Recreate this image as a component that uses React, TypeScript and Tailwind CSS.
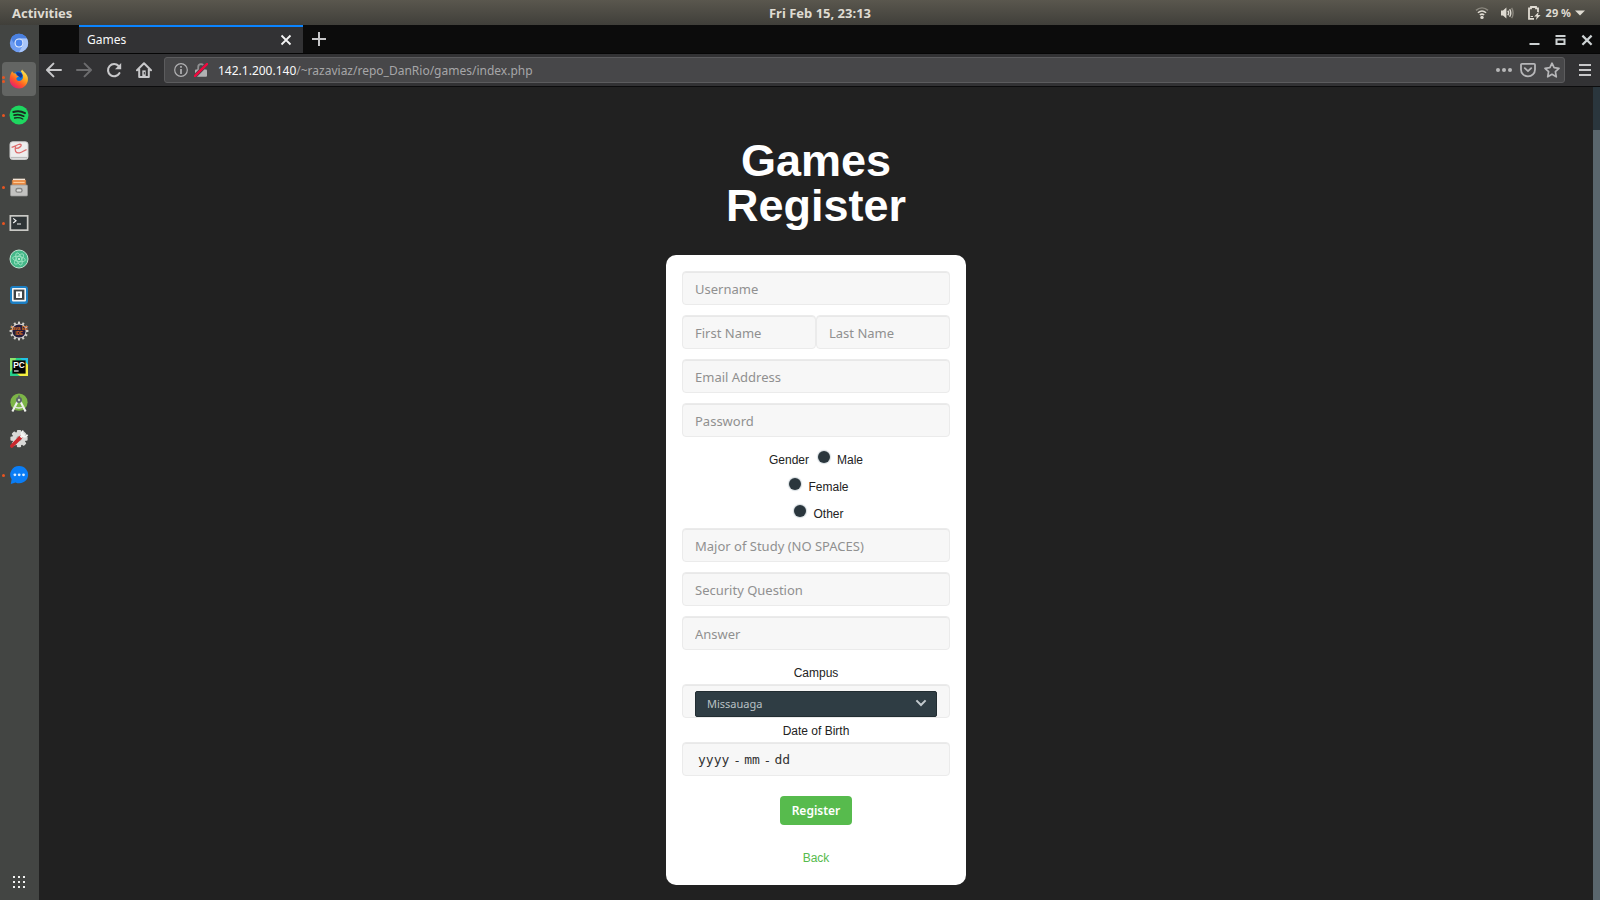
import type { ReactNode } from "react";

const field =
  "h-[34px] w-full min-w-0 rounded border border-[#ebebeb] bg-[#f7f7f7] px-3 pt-px font-['Noto_Sans',sans-serif] text-[13px] text-[#333] shadow-[inset_0_1px_0_#e8e8e8] outline-none placeholder:text-[#909090]";

type DockItem = { name: string; windows: number; active?: boolean; icon: ReactNode };

const teeth = [0, 30, 60, 90, 120, 150, 180, 210, 240, 270, 300, 330];

const dockItems: DockItem[] = [
  {
    name: "Chromium",
    windows: 0,
    icon: (
      <>
        <circle cx="10" cy="10" r="9.2" fill="#6f9df2" />
        <path d="M2 5.4A9.2 9.2 0 0 1 18 5.6H10A4.5 4.5 0 0 0 6 12.2Z" fill="#4a80e0" />
        <path d="M18 5.6A9.2 9.2 0 0 1 10 19.2L14 12.2A4.5 4.5 0 0 0 10 5.6Z" fill="#a9c6fa" />
        <circle cx="10" cy="10" r="4.5" fill="#e6eefc" />
        <circle cx="10" cy="10" r="3.4" fill="#4c86ee" />
      </>
    ),
  },
  {
    name: "Firefox",
    windows: 2,
    active: true,
    icon: (
      <>
        <defs>
          <linearGradient id="fox" x1="0.9" y1="0" x2="0.2" y2="1">
            <stop offset="0" stopColor="#fff36b" />
            <stop offset="0.35" stopColor="#ffb01e" />
            <stop offset="0.65" stopColor="#ff5a26" />
            <stop offset="1" stopColor="#e5127a" />
          </linearGradient>
        </defs>
        <circle cx="9.8" cy="9" r="6.8" fill="#0b76e0" />
        <path d="M7 3.5A6.5 6.5 0 0 1 14 6L12 9 8 6Z" fill="#17348f" />
        <path
          d="M1.6 5.2 3 2.2 5 4.4C6.2 4 7.4 4.6 7.6 6.6L9.8 7.2 7.4 9C7 11.6 9.4 12.8 12 11.6 14.6 10.2 14.8 6 11.8 2.6L13.2 0.6C13.5 2.4 17.6 4 18.8 8.4 19.8 14.4 15.4 19.4 10 19.4 4.4 19.4 0.4 15 0.7 10 0.8 8.2 1 6.6 1.6 5.2Z"
          fill="url(#fox)"
        />
      </>
    ),
  },
  {
    name: "Spotify",
    windows: 1,
    icon: (
      <>
        <circle cx="10" cy="10" r="9.5" fill="#1ed760" />
        <g fill="none" stroke="#1a2a20" strokeLinecap="round">
          <path d="M4.3 7C8 5.8 12.6 6.2 16 8.1" strokeWidth="2" />
          <path d="M5 10.1C8.2 9.2 12 9.6 14.8 11.2" strokeWidth="1.7" />
          <path d="M5.6 13C8.4 12.3 11.4 12.6 13.8 14" strokeWidth="1.4" />
        </g>
      </>
    ),
  },
  {
    name: "Document viewer",
    windows: 0,
    icon: (
      <>
        <rect x="1" y="0.8" width="18" height="17.6" rx="2.5" fill="#ededed" stroke="#cfcfcf" />
        <path d="M2.6 6.4C7 5 8.6 3.4 11 3.2 14 3.4 11 7.6 6.6 7.4M6.6 5.4C5.4 9.4 6.6 12.4 10.4 11.8 13.6 11.2 15.4 9 17.6 8.6" fill="none" stroke="#de6b6b" strokeWidth="1.3" />
        <path d="M2 16.6H18" stroke="#bcbcbc" strokeWidth="1.4" />
      </>
    ),
  },
  {
    name: "Files",
    windows: 1,
    icon: (
      <>
        <path d="M3 1.5H17L18.5 8H1.5Z" fill="#5b5148" />
        <rect x="3.2" y="3" width="13.6" height="6" fill="#e98a43" />
        <path d="M4 2.4H16" stroke="#f5e6d8" strokeWidth="1.4" />
        <path d="M4.4 5.4H15.6" stroke="#ffd2a0" />
        <rect x="1.5" y="8" width="17" height="11" rx="1" fill="#c2c2c0" stroke="#9a9a98" strokeWidth="0.7" />
        <rect x="6.3" y="10.8" width="7.4" height="5" rx="2.4" fill="#858583" />
        <rect x="7.7" y="12.2" width="4.6" height="2.4" rx="1.2" fill="#dededc" />
      </>
    ),
  },
  {
    name: "Terminal",
    windows: 1,
    icon: (
      <>
        <rect x="0.5" y="2" width="19" height="16" fill="#c9c9c5" />
        <rect x="2.2" y="3.7" width="15.6" height="12.6" fill="#2e3436" />
        <path d="M4.2 5.4 7 7.7 4.2 10M8 11H12" fill="none" stroke="#f2f2f2" strokeWidth="1.2" />
      </>
    ),
  },
  {
    name: "Atom",
    windows: 0,
    icon: (
      <>
        <circle cx="10" cy="10" r="9" fill="#44b889" stroke="#bfe6d2" strokeWidth="1" />
        <g fill="none" stroke="#a4e6c5" strokeWidth="0.8">
          <ellipse cx="10" cy="10" rx="6.4" ry="2.6" transform="rotate(10 10 10)" />
          <ellipse cx="10" cy="10" rx="6.4" ry="2.6" transform="rotate(70 10 10)" />
          <ellipse cx="10" cy="10" rx="6.4" ry="2.6" transform="rotate(130 10 10)" />
        </g>
        <circle cx="10" cy="10" r="1" fill="#dffbeb" />
      </>
    ),
  },
  {
    name: "Brackets",
    windows: 0,
    icon: (
      <>
        <rect x="1" y="1" width="18" height="18" rx="3" fill="#1c7fc4" />
        <rect x="3" y="3" width="14" height="13.4" rx="0.8" fill="#f4f4f4" />
        <rect x="4.6" y="4.6" width="10.8" height="10.2" fill="#3d4145" />
        <path d="M7 6.4H13V13H7Z" fill="#fff" />
        <path d="M9.2 8H10.8V11.4H9.2Z" fill="#8d9093" />
      </>
    ),
  },
  {
    name: "Java EE IDE",
    windows: 0,
    icon: (
      <>
        {teeth.map((angle) => (
          <rect key={angle} x="9" y="0.6" width="2" height="3.4" fill="#d5d2cc" transform={`rotate(${angle} 10 10)`} />
        ))}
        <circle cx="10" cy="10" r="7.6" fill="#d5d2cc" />
        <circle cx="10" cy="10" r="6.6" fill="#251d3c" />
        <g fill="#d9711e" fontFamily="Liberation Sans, sans-serif" fontWeight="700" textAnchor="middle">
          <text x="10" y="9.4" fontSize="4.6">Java EE</text>
          <text x="10" y="14.2" fontSize="4.6">IDE</text>
        </g>
      </>
    ),
  },
  {
    name: "PyCharm",
    windows: 0,
    icon: (
      <>
        <path d="M1 1H19V19H1Z" fill="#25d08b" />
        <path d="M11 1H19V12L15 5Z" fill="#21c3e8" />
        <path d="M1 1H7L4 12 1 15Z" fill="#8fe36a" />
        <path d="M16 4 19 8V19H11L7 16Z" fill="#f4ee3f" />
        <rect x="3.4" y="3.4" width="13.2" height="13.2" fill="#050505" />
        <text x="10" y="10.8" fontSize="8.4" fontWeight="700" fontFamily="Liberation Sans, sans-serif" fill="#fff" textAnchor="middle">PC</text>
        <path d="M5 14H9.6" stroke="#fff" strokeWidth="1.1" />
      </>
    ),
  },
  {
    name: "Android Studio",
    windows: 0,
    icon: (
      <>
        <circle cx="10" cy="9.2" r="8.6" fill="#7cb447" />
        <path d="M8.8 8 3.4 18.6M11.2 8 16.6 18.6" stroke="#f0f2ee" strokeWidth="2.1" />
        <path d="M5 13.2C8 15.4 12 15.4 15 13.2" fill="none" stroke="#e3e8df" strokeWidth="1.3" />
        <circle cx="10" cy="7" r="3" fill="#5c6468" />
        <circle cx="10" cy="7" r="1.2" fill="#c9d6bd" />
        <rect x="9.2" y="2.4" width="1.6" height="2.4" fill="#5c6468" />
      </>
    ),
  },
  {
    name: "System settings",
    windows: 0,
    icon: (
      <>
        {[0, 45, 90, 135, 180, 225, 270, 315].map((angle) => (
          <rect key={angle} x="7.9" y="1" width="4.2" height="4" rx="1" fill="#d9d9d7" transform={`rotate(${angle} 10 9.6)`} />
        ))}
        <circle cx="10" cy="9.6" r="6.8" fill="#d9d9d7" />
        <circle cx="10" cy="9.6" r="2.6" fill="#a5a5a3" />
        <path d="M2.8 17 11.6 8.4" stroke="#c9282d" strokeWidth="3.6" strokeLinecap="round" />
        <path d="M11.6 8.4 15.4 4.8" stroke="#f0f0ee" strokeWidth="2.6" />
        <path d="M14.4 1.8A3 3 0 1 0 18.4 5.6" fill="none" stroke="#f6f6f4" strokeWidth="1.9" />
      </>
    ),
  },
  {
    name: "Messenger",
    windows: 1,
    icon: (
      <>
        <path d="M10.2 1A8.8 8.6 0 1 1 6.6 17.4L1.8 19 2.6 14.2A8.8 8.6 0 0 1 10.2 1Z" fill="#0a7df5" />
        <g fill="#d9ecff">
          <circle cx="5.9" cy="9.8" r="1.4" />
          <circle cx="10.2" cy="9.8" r="1.4" />
          <circle cx="14.5" cy="9.8" r="1.4" />
        </g>
      </>
    ),
  },
];

function SystemBar() {
  return (
    <header className="grid h-[25px] shrink-0 grid-cols-3 items-center bg-gradient-to-b from-[#5a574e] to-[#403f3a] px-3 font-['Noto_Sans',sans-serif] text-[13px] leading-4 font-bold text-[#dfdbd2]">
      <button className="justify-self-start">Activities</button>
      <time className="justify-self-center pl-10">Fri Feb 15, 23:13</time>
      <div className="flex items-center justify-self-end pr-[3px]">
        <svg className="mr-[11px] h-3.5 w-3.5" viewBox="0 0 14 14" fill="none" stroke="#dfdbd2" strokeWidth="1.5" aria-label="Wi-Fi">
          <path d="M1 4.4C4.6 1.2 9.4 1.2 13 4.4" stroke="#8b887f" />
          <path d="M2.9 6.8C5.4 4.7 8.6 4.7 11.1 6.8" />
          <path d="M4.8 9C6.2 7.9 7.8 7.9 9.2 9" />
          <circle cx="7" cy="11.4" r="1.7" fill="#dfdbd2" stroke="none" />
        </svg>
        <svg className="mr-[13px] h-3.5 w-3.5" viewBox="0 0 14 14" fill="none" stroke="#dfdbd2" strokeWidth="1.4" aria-label="Volume">
          <path d="M1 4.6H3L6.4 1.6V12.4L3 9.4H1Z" fill="#dfdbd2" stroke="none" />
          <path d="M7.8 4.8C8.8 6 8.8 8 7.8 9.2M9.6 3.2C11.2 5.2 11.2 8.8 9.6 10.8" />
          <path d="M11.6 1.8C13.6 4.6 13.6 9.4 11.6 12.2" stroke="#8b887f" />
        </svg>
        <svg className="mr-[5px] h-3.5 w-3.5" viewBox="0 0 14 14" aria-label="Battery charging">
          <path d="M7 12.8H2V2.4H4V1H9V2.4H11V6" fill="none" stroke="#dfdbd2" strokeWidth="1.8" />
          <path d="M3.6 10.5H6" stroke="#dfdbd2" />
          <path d="M11.6 6 7.2 10.6H9.8L8.8 14 13.6 9H11Z" fill="#dfdbd2" />
        </svg>
        <span className="mr-1 text-[11px]">29 %</span>
        <svg className="h-1.5 w-2.5" viewBox="0 0 10 6" aria-hidden="true">
          <path d="M0 0.5H10L5 5.5Z" fill="#dfdbd2" />
        </svg>
      </div>
    </header>
  );
}

function Dock() {
  return (
    <nav aria-label="Dock" className="flex w-[39px] shrink-0 flex-col items-start bg-[#434543] pt-px pl-0.5">
      <ul className="flex flex-col gap-0.5">
        {dockItems.map((item) => (
          <li key={item.name}>
            <button
              aria-label={item.name}
              className={
                item.active
                  ? "relative flex h-[34px] w-[34px] items-center justify-center rounded bg-[#636563]"
                  : "relative flex h-[34px] w-[34px] items-center justify-center rounded"
              }
            >
              <span className="absolute inset-y-0 left-0 flex flex-col items-center justify-center gap-px">
                {Array.from({ length: item.windows }, (_, i) => (
                  <span key={i} className="h-[3px] w-[3px] rounded-full bg-[#e95420]" />
                ))}
              </span>
              <svg className="h-5 w-5" viewBox="0 0 20 20">
                {item.icon}
              </svg>
            </button>
          </li>
        ))}
      </ul>
      <button aria-label="Show applications" className="mt-auto mb-[11px] ml-[10px]">
        <svg className="h-[14px] w-[14px]" viewBox="0 0 14 14" fill="#f2f2f2">
          {[1, 6, 11].map((y) => [1, 6, 11].map((x) => <rect key={`${x}-${y}`} x={x} y={y} width="2" height="2" />))}
        </svg>
      </button>
    </nav>
  );
}

function TabStrip() {
  return (
    <div className="flex h-[29px] shrink-0 border-b border-[#060606] bg-[#0c0c0c]">
      <div className="ml-10 flex w-56 items-center justify-between border-t-2 border-[#0a84ff] bg-[#323234] pr-[11px] pl-2">
        <span className="font-['Noto_Sans',sans-serif] text-[12px] leading-4 text-[#f9f9fa]">Games</span>
        <button aria-label="Close tab">
          <svg className="h-3 w-3" viewBox="0 0 12 12" stroke="#f4f4f5" strokeWidth="1.8">
            <path d="M1.5 1.5 10.5 10.5M10.5 1.5 1.5 10.5" />
          </svg>
        </button>
      </div>
      <button aria-label="New tab" className="ml-[9px]">
        <svg className="h-3.5 w-3.5" viewBox="0 0 14 14" stroke="#c6c6c8" strokeWidth="2">
          <path d="M7 0V14M0 7H14" />
        </svg>
      </button>
      <div className="mr-[7px] ml-auto flex items-center gap-[15px] pt-px">
        <button aria-label="Minimize">
          <svg className="h-3 w-[11px]" viewBox="0 0 11 12">
            <path d="M0.5 10H10.5" stroke="#cdd2d3" strokeWidth="2" />
          </svg>
        </button>
        <button aria-label="Restore">
          <svg className="h-3 w-[11px]" viewBox="0 0 11 12" fill="none" stroke="#cdd2d3" strokeWidth="2">
            <path d="M0.5 2H10.5M1.5 5.5H9.5V10H1.5Z" />
          </svg>
        </button>
        <button aria-label="Close window">
          <svg className="h-3 w-3" viewBox="0 0 12 12" stroke="#cdd2d3" strokeWidth="2.2">
            <path d="M1.4 1.6 10.6 10.8M10.6 1.6 1.4 10.8" />
          </svg>
        </button>
      </div>
    </div>
  );
}

function Toolbar() {
  return (
    <div className="flex h-[33px] shrink-0 items-center border-b border-[#0c0c0d] bg-[#323234] pr-[9px] pl-[7px]">
      <div className="mr-3 flex items-center gap-3.5">
        <button aria-label="Back">
          <svg className="h-4 w-4" viewBox="0 0 16 16" fill="none" stroke="#c8c8ca" strokeWidth="2" strokeLinecap="round" strokeLinejoin="round">
            <path d="M15 8H1.2M7.4 1.6 1 8 7.4 14.4" />
          </svg>
        </button>
        <button aria-label="Forward">
          <svg className="h-4 w-4" viewBox="0 0 16 16" fill="none" stroke="#6c6c6e" strokeWidth="2" strokeLinecap="round" strokeLinejoin="round">
            <path d="M1 8H14.8M8.6 1.6 15 8 8.6 14.4" />
          </svg>
        </button>
        <button aria-label="Reload">
          <svg className="h-4 w-4" viewBox="0 0 16 16" fill="none" stroke="#c8c8ca" strokeWidth="2.1" strokeLinecap="round">
            <path d="M13.4 11.2A6.1 6.1 0 1 1 12.6 4" />
            <path d="M15.2 1V7.2H9Z" fill="#c8c8ca" stroke="none" />
          </svg>
        </button>
        <button aria-label="Home">
          <svg className="h-4 w-4" viewBox="0 0 16 16" fill="none" stroke="#c8c8ca" strokeWidth="2" strokeLinejoin="round" strokeLinecap="round">
            <path d="M1 8.2 8 1.2 15 8.2M3.2 7V15H12.8V7" />
            <rect x="6.3" y="8.4" width="3.4" height="6.4" fill="#c8c8ca" stroke="none" />
            <path d="M8.3 10.4V12" stroke="#323234" strokeWidth="1" />
          </svg>
        </button>
      </div>
      <div className="flex h-[26px] flex-1 items-center rounded-[3px] border border-[#5c5c5e] bg-[#474749] px-[9px]">
        <svg className="mr-[6px] h-3.5 w-3.5" viewBox="0 0 14 14" aria-label="Site information">
          <circle cx="7" cy="7" r="6.3" fill="none" stroke="#b1b1b3" strokeWidth="1.2" />
          <path d="M7 3V4.8M7 6V11" stroke="#b1b1b3" strokeWidth="1.7" />
        </svg>
        <svg className="mr-2.5 h-3.5 w-3.5" viewBox="0 0 14 14" aria-label="Connection is not secure">
          <path d="M4.2 7V4A2.8 2.8 0 0 1 9.8 4V7" fill="none" stroke="#8f8f91" strokeWidth="1.8" />
          <rect x="1" y="6.4" width="12" height="7.4" rx="1" fill="#b1b1b3" />
          <path d="M0.6 13.4 13.2 0.8" stroke="#474749" strokeWidth="4" />
          <path d="M0.6 13.4 13.2 0.8" stroke="#f0093f" strokeWidth="2.4" strokeLinecap="round" />
        </svg>
        <a
          href="http://142.1.200.140/~razaviaz/repo_DanRio/games/index.php"
          className="pt-0.5 font-['Noto_Sans',sans-serif] text-[12px] leading-4 text-[#a6a6a8]"
        >
          <span className="text-[#f9f9fa]">142.1.200.140</span>/~razaviaz/repo_DanRio/games/index.php
        </a>
        <div className="-mr-[5px] ml-auto flex items-center gap-2">
          <button aria-label="Page actions">
            <svg className="h-4 w-4" viewBox="0 0 16 16" fill="#b7b7b9">
              <circle cx="2" cy="8" r="2" />
              <circle cx="8" cy="8" r="2" />
              <circle cx="14" cy="8" r="2" />
            </svg>
          </button>
          <button aria-label="Save to Pocket">
            <svg className="h-4 w-4" viewBox="0 0 16 16" fill="none" stroke="#b7b7b9" strokeWidth="1.8" strokeLinecap="round" strokeLinejoin="round">
              <path d="M2 1.8H14A1 1 0 0 1 15 2.8V7.4A7 7 0 0 1 1 7.4V2.8A1 1 0 0 1 2 1.8Z" />
              <path d="M4.8 6.2 8 9.2 11.2 6.2" />
            </svg>
          </button>
          <button aria-label="Bookmark this page">
            <svg className="h-4 w-4" viewBox="0 0 16 16" fill="none" stroke="#b7b7b9" strokeWidth="1.7" strokeLinejoin="round">
              <path d="M8 1.2 10.1 5.7 15 6.3 11.4 9.7 12.3 14.8 8 12.3 3.7 14.8 4.6 9.7 1 6.3 5.9 5.7Z" />
            </svg>
          </button>
        </div>
      </div>
      <button aria-label="Open menu" className="ml-[14px]">
        <svg className="h-3 w-3" viewBox="0 0 12 12" stroke="#c8c8ca" strokeWidth="2">
          <path d="M0 1H12M0 6H12M0 11H12" />
        </svg>
      </button>
    </div>
  );
}

function TextField({ label, type = "text" }: { label: string; type?: string }) {
  return <input type={type} aria-label={label} placeholder={label} className={field} />;
}

function GenderOption({ label }: { label: string }) {
  return (
    <label className="flex items-start gap-[7px] pl-1.5">
      <input
        type="radio"
        name="gender"
        className="h-3 w-3 appearance-none rounded-full bg-[#2a363d] shadow-[0_0_1px_1px_#d3dade]"
      />
      <span>{label}</span>
    </label>
  );
}

const datePart = "bg-transparent outline-none placeholder:text-[#333]";

function RegisterForm() {
  return (
    <form
      onSubmit={(event) => event.preventDefault()}
      className="flex w-[300px] flex-col rounded-[10px] bg-white px-4 pt-4 pb-[18px] text-[12px] leading-[18px] text-[#222]"
    >
      <div className="flex flex-col gap-2.5">
        <TextField label="Username" />
        <div className="flex">
          <TextField label="First Name" />
          <TextField label="Last Name" />
        </div>
        <TextField label="Email Address" />
        <TextField label="Password" type="password" />
      </div>
      <div role="radiogroup" aria-label="Gender" className="mt-3.5 mb-[5px] flex flex-col items-center gap-[9px]">
        <div className="flex gap-[3px]">
          <span>Gender</span>
          <GenderOption label="Male" />
        </div>
        <GenderOption label="Female" />
        <GenderOption label="Other" />
      </div>
      <div className="flex flex-col gap-2.5">
        <TextField label="Major of Study (NO SPACES)" />
        <TextField label="Security Question" />
        <TextField label="Answer" />
      </div>
      <label htmlFor="campus" className="mt-3.5 mb-0.5 text-center">
        Campus
      </label>
      <div className="relative flex h-[34px] items-end rounded border border-[#ebebeb] bg-[#f7f7f7] px-3 shadow-[inset_0_1px_0_#e8e8e8]">
        <select
          id="campus"
          className="h-[26px] w-full appearance-none rounded-[2px] border border-[#222d32] bg-[#2f3d44] px-[11px] font-['Noto_Sans',sans-serif] text-[11px] text-[#b9c1c5] outline-none"
        >
          <option>Missauaga</option>
        </select>
        <svg className="pointer-events-none absolute right-[22px] bottom-[10px] h-2 w-3" viewBox="0 0 12 8" fill="none" stroke="#c3cace" strokeWidth="2">
          <path d="M1.4 1.4 6 6 10.6 1.4" />
        </svg>
      </div>
      <label htmlFor="birth-year" className="mt-1 mb-0.5 text-center">
        Date of Birth
      </label>
      <div
        role="group"
        aria-label="Date of Birth"
        className="flex h-[34px] items-center gap-[5px] rounded border border-[#ebebeb] bg-[#f7f7f7] px-[15px] pt-px font-['DejaVu_Sans_Mono',monospace] text-[13px] text-[#333] shadow-[inset_0_1px_0_#e8e8e8]"
      >
        <input id="birth-year" type="text" placeholder="yyyy" className={`w-8 ${datePart}`} />
        <span className="font-['Noto_Sans',sans-serif]">-</span>
        <input type="text" aria-label="Month" placeholder="mm" className={`w-4 ${datePart}`} />
        <span className="font-['Noto_Sans',sans-serif]">-</span>
        <input type="text" aria-label="Day" placeholder="dd" className={`w-4 ${datePart}`} />
      </div>
      <button
        type="submit"
        className="mt-5 h-[29px] self-center rounded bg-[#57bb4d] px-3 font-['Noto_Sans',sans-serif] text-[12px] font-semibold text-white"
      >
        Register
      </button>
      <a href="#back" className="mt-6 self-center text-[#57bb4d]">
        Back
      </a>
    </form>
  );
}

export default function App() {
  return (
    <div className="flex min-h-screen flex-col bg-[#212121] font-['Liberation_Sans',Arial,sans-serif]">
      <SystemBar />
      <div className="flex flex-1">
        <Dock />
        <div className="flex min-w-0 flex-1 flex-col">
          <TabStrip />
          <Toolbar />
          <div className="flex flex-1">
            <main className="flex flex-1 flex-col items-center pt-[51px] pb-3">
              <h1 className="mb-[27px] text-center text-[45px] leading-[45px] font-bold text-white">
                Games
                <br />
                Register
              </h1>
              <RegisterForm />
            </main>
            <div className="w-[7px] bg-[#5a666d]">
              <div className="h-[43px] bg-[#2a363d]" />
            </div>
          </div>
        </div>
      </div>
    </div>
  );
}
